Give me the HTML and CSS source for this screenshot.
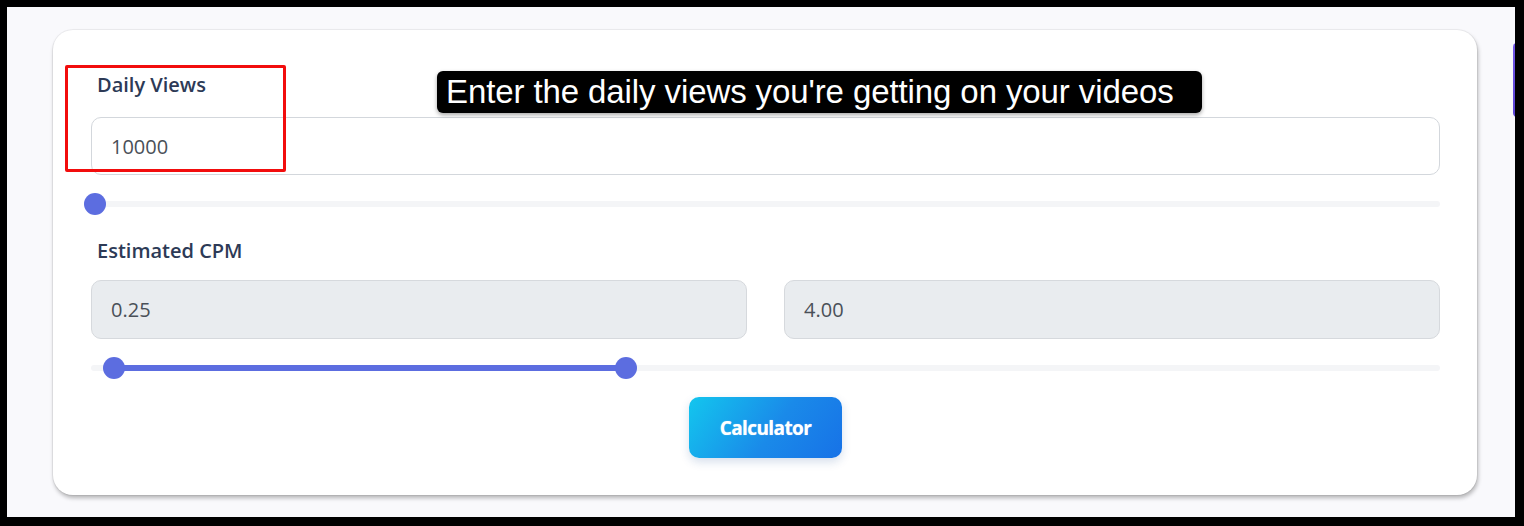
FILE: index.html
```html
<!DOCTYPE html>
<html lang="en">
<head>
<meta charset="utf-8">
<title>Calculator</title>
<link rel="stylesheet" href="styles.css">
</head>
<body>
<div class="frame">
  <div class="card">
    <label class="label label-first">Daily Views</label>
    <div class="input">10000</div>
    <div class="slider slider-single">
      <div class="track"></div>
      <div class="thumb thumb-a"></div>
    </div>
    <label class="label label-second">Estimated CPM</label>
    <div class="input-row">
      <div class="input input-disabled">0.25</div>
      <div class="input input-disabled">4.00</div>
    </div>
    <div class="slider slider-range">
      <div class="track"></div>
      <div class="fill"></div>
      <div class="thumb thumb-b"></div>
      <div class="thumb thumb-c"></div>
    </div>
    <div class="actions">
      <button class="btn" type="button">Calculator</button>
    </div>
    <div class="highlight"></div>
    <div class="tooltip">Enter the daily views you're getting on your videos</div>
  </div>
  <div class="side-bar"></div>
</div>
</body>
</html>
```

FILE: styles.css
```css
* { box-sizing: border-box; }

html, body {
  margin: 0;
  height: 526px;
  overflow: hidden;
}

body {
  background: #000;
  padding: 7px 9px 9px 7px;
  font-family: "Open Sans", "Noto Sans", sans-serif;
}

.frame {
  width: 1508px;
  height: 510px;
  background: #f9f9fc;
  display: flex;
  align-items: flex-start;
  gap: 36px;
  overflow: hidden;
  padding: 23px 0 0 46px;
}

.card {
  position: relative;
  flex: 0 0 1424px;
  height: 465px;
  background: #fff;
  border-radius: 20px;
  box-shadow: 0 0 0 1px rgba(0, 0, 0, 0.05), 1px 3px 4px rgba(0, 0, 0, 0.28);
  padding: 40px 37px 37px 38px;
  display: flex;
  flex-direction: column;
}

.label {
  display: block;
  font-size: 20px;
  line-height: 30px;
  font-weight: 600;
  color: #2d3a56;
  padding-left: 6px;
}

.label-first { margin-bottom: 17px; }
.label-second { margin-top: 21px; margin-bottom: 14px; }

.input {
  height: 58px;
  border: 1px solid #d3d7dc;
  border-radius: 10px;
  background: #fff;
  padding-left: 19px;
  font-size: 20px;
  color: #4a5058;
  display: flex;
  align-items: center;
}

.input-disabled {
  height: 59px;
  background: #e9ecef;
  border-color: #d6d9dd;
}

.input-row {
  display: grid;
  grid-template-columns: 1fr 1fr;
  gap: 37px;
}

.slider {
  position: relative;
  height: 22px;
  margin-top: 18px;
  display: flex;
  align-items: center;
}

.track {
  width: 100%;
  height: 6px;
  border-radius: 3px;
  background: #f4f5f7;
}

.fill {
  position: absolute;
  left: 23px;
  width: 512px;
  top: 8px;
  height: 6px;
  background: #5c6de0;
}

.thumb {
  position: absolute;
  top: 0;
  width: 22px;
  height: 22px;
  border-radius: 50%;
  background: #5c6de0;
}

.thumb-a { left: -7px; }
.thumb-b { left: 12px; }
.thumb-c { left: 524px; }

.actions {
  display: flex;
  justify-content: center;
  margin-top: 18px;
}

.btn {
  width: 153px;
  height: 61px;
  border: 0;
  border-radius: 10px;
  background: linear-gradient(125deg, #13c6ee 0%, #1a8ae9 55%, #1772e7 100%);
  color: #fff;
  font-family: "Open Sans", "Noto Sans", sans-serif;
  font-weight: 700;
  font-size: 19px;
  letter-spacing: -0.6px;
  box-shadow: 0 4px 10px rgba(30, 80, 150, 0.18);
  text-shadow: 0 0 1px rgba(255, 255, 255, 0.6);
}

.highlight {
  position: absolute;
  left: 12px;
  top: 35px;
  width: 221px;
  height: 107px;
  border: 3px solid #f20d0d;
  border-radius: 2px;
}

.tooltip {
  position: absolute;
  left: 384px;
  top: 41px;
  width: 765px;
  height: 42px;
  background: #000;
  color: #fff;
  border-radius: 6px;
  box-shadow: 0 2px 4px rgba(0, 0, 0, 0.35);
  font-family: "Liberation Sans", Arial, sans-serif;
  font-size: 33px;
  line-height: 42px;
  padding-left: 9px;
  white-space: nowrap;
  letter-spacing: -0.1px;
}

.side-bar {
  flex: 0 0 8px;
  height: 74px;
  margin-top: 13px;
  border-radius: 4px 0 0 4px;
  background: linear-gradient(180deg, #7257e6, #5b44d4);
}
```
